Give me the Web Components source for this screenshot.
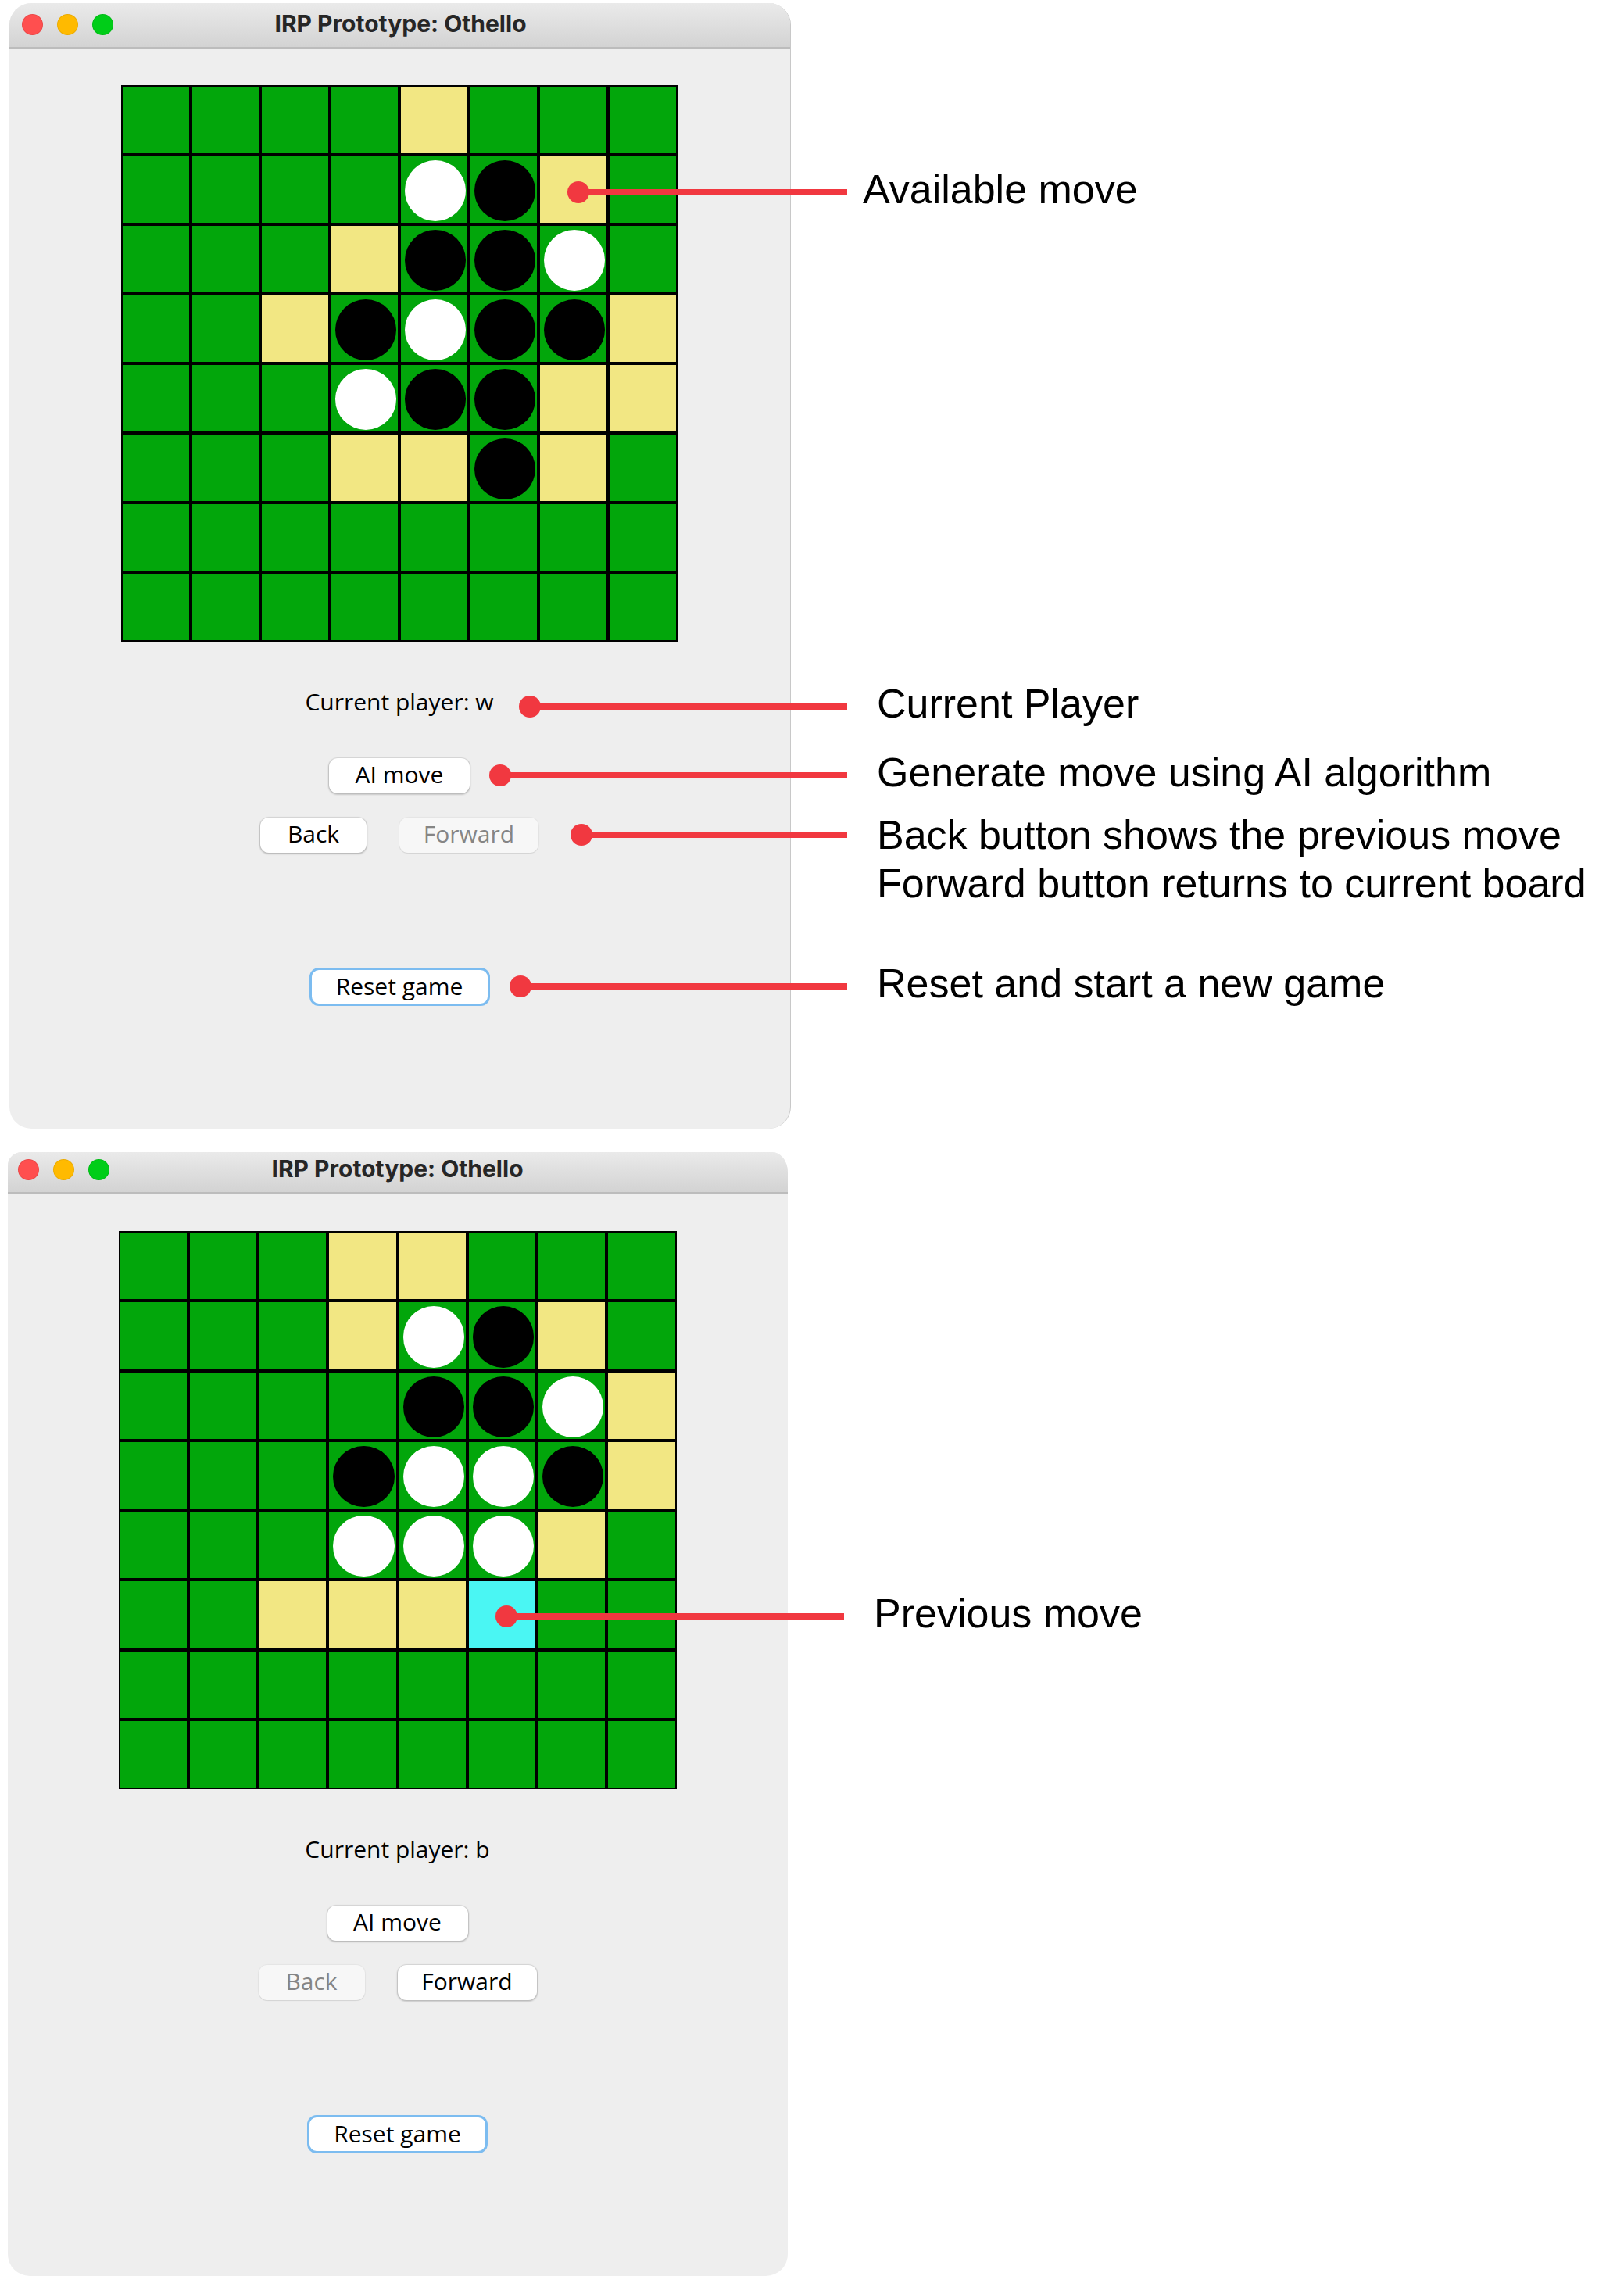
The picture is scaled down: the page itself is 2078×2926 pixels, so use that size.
<!DOCTYPE html>
<html lang="en">
<head>
<meta charset="utf-8">
<title>IRP Prototype: Othello</title>
<style>
  body { margin: 0; background: #fff; color: #000; font-family: "Liberation Sans", Arial, sans-serif; }
</style>
</head>
<body>
<othello-guide></othello-guide>

<script>
class OthelloBoard extends HTMLElement {
  connectedCallback() {
    const kinds = { m: "available move", p: "previous move", w: "white piece", b: "black piece", ".": "empty" };
    const rows = this.getAttribute("rows").trim().split(/\s+/);
    const cells = rows.map((row, r) => [...row].map((c, i) =>
      `<div class="cell ${c === "." ? "" : c}" role="img" aria-label="${"abcdefgh"[i]}${r + 1} ${kinds[c]}"></div>`).join("")).join("");
    this.attachShadow({ mode: "open" }).innerHTML = `
      <style>
        :host { display: grid; grid-template-columns: repeat(8, 1fr); gap: 4px; padding: 2px;
                box-sizing: border-box; background: #000; width: 100%; max-width: var(--board, 712px); aspect-ratio: 1; }
        .cell { background: #02a60b; box-sizing: border-box; padding: 5px 2px 2px 5px; display: grid; }
        .m { background: #f2e783; }
        .p { background: #4af6f3; }
        .w::before, .b::before { content: ""; border-radius: 50%; background: #fff; }
        .b::before { background: #000; }
      </style>${cells}`;
  }
}
customElements.define("othello-board", OthelloBoard);

class MacButton extends HTMLElement {
  connectedCallback() {
    const off = this.hasAttribute("disabled") ? "disabled" : "";
    this.attachShadow({ mode: "open" }).innerHTML = `
      <style>
        :host { display: block; }
        button { display: block; box-sizing: border-box; height: 45px; min-width: var(--w, 180px); padding: 0 0 3px;
                 border: 0; border-radius: 11px; background: #fff; color: #000;
                 font: inherit; line-height: 42px;
                 box-shadow: 0 0 1px 1px rgba(0,0,0,.07), 0 1px 2px 1px rgba(0,0,0,.16); }
        button:disabled { background: #f7f7f7; color: #858585; box-shadow: 0 0 1px 1px rgba(0,0,0,.04), 0 1px 1px rgba(0,0,0,.08); }
        :host([focused]) button { height: 49px; border: 3px solid #7cbcf0; box-shadow: none; border-radius: 12px; }
      </style>
      <button type="button" ${off}><slot></slot></button>`;
  }
}
customElements.define("mac-button", MacButton);

class MacWindow extends HTMLElement {
  connectedCallback() {
    this.attachShadow({ mode: "open" }).innerHTML = `
      <style>
        :host { display: block; box-sizing: border-box; background: #eee; overflow: hidden;
                border-radius: var(--corners, 28px); border-right: var(--edge, 1px solid #c8c8c8); }
        header { display: grid; grid-template-columns: 1fr auto 1fr; align-items: start; box-sizing: border-box;
                 padding: var(--bar-top, 14px) 14px 0 var(--bar-left, 16px); height: var(--bar, 59px);
                 background: linear-gradient(#eaeaea, #d3d3d3); border-bottom: 3px solid #bcbcbc; }
        .lights { display: flex; gap: 18px; }
        .lights i { width: 27px; height: 27px; border-radius: 50%; background: #ff4f4f; box-shadow: inset 0 0 0 1px rgba(0,0,0,.08); }
        .lights i:nth-child(2) { background: #ffba00; }
        .lights i:nth-child(3) { background: #00cd18; }
        h1 { margin: 0; font: 700 30px/25px Inter, "Liberation Sans", sans-serif; color: #262626; }
        main { display: flex; flex-direction: column; align-items: center; padding: var(--main-top, 46px) 1px 157px 0; }
      </style>
      <header><div class="lights"><i></i><i></i><i></i></div><h1>${this.getAttribute("heading")}</h1></header>
      <main><slot></slot></main>`;
  }
}
customElements.define("mac-window", MacWindow);

class OthelloGame extends HTMLElement {
  connectedCallback() {
    const at = n => this.getAttribute(n);
    this.attachShadow({ mode: "open" }).innerHTML = `
      <style>
        :host { display: block; min-width: 0; }
        .panel { display: flex; flex-direction: column; align-items: center; width: 100%;
                 font: 500 30px/40px "Open Sans", "Noto Sans", sans-serif; }
        p { margin: 57px 0 52px; }
        .row { display: flex; gap: 42px; margin: 31px 0 147px; }
      </style>
      <mac-window heading="IRP Prototype: Othello">
        <div class="panel">
          <othello-board rows="${at("rows")}"></othello-board>
          <p>Current player: ${at("player")}</p>
          <mac-button>AI move</mac-button>
          <div class="row">
            <mac-button style="--w:136px" ${at("player") === "b" ? "disabled" : ""}>Back</mac-button>
            <mac-button style="--w:178px" ${at("player") === "w" ? "disabled" : ""}>Forward</mac-button>
          </div>
          <mac-button style="--w:231px" focused>Reset game</mac-button>
        </div>
      </mac-window>`;
  }
}
customElements.define("othello-game", OthelloGame);

class CallOut extends HTMLElement {
  connectedCallback() {
    this.attachShadow({ mode: "open" }).innerHTML = `
      <style>
        :host { display: flex; align-items: flex-start; gap: 38px; font-size: 52px; line-height: 62px; white-space: nowrap; }
        .lead { flex: none; display: flex; align-items: center; width: var(--len); height: 28px; margin-top: 21px; }
        :host([two-line]) .lead { margin-top: 17px; }
        .dot { flex: none; width: 28px; height: 28px; border-radius: 50%; background: #f13840; }
        .line { flex: 1; height: 8px; margin-left: -2px; background: #f13840; }
      </style>
      <div class="lead"><span class="dot"></span><span class="line"></span></div>
      <div><slot></slot></div>`;
  }
}
customElements.define("call-out", CallOut);

class OthelloGuide extends HTMLElement {
  connectedCallback() {
    this.attachShadow({ mode: "open" }).innerHTML = `
      <style>
        :host { display: flex; flex-direction: column; gap: 30px; padding: 4px 0 14px; }
        section { display: grid; grid-template-columns: minmax(0, 1012px) 1fr; }
        othello-game { grid-area: 1 / 1; margin-left: 12px; }
        .second { grid-template-columns: minmax(0, 1008px) 1fr; }
        .second othello-game { margin-left: 10px; --board: 714px; --bar: 54px; --bar-top: 9px; --bar-left: 13px;
                               --main-top: 47px; --edge: 0; --corners: 18px 20px 28px 28px / 17px 26px 28px 28px; }
        .notes { grid-area: 1 / 1 / 2 / 3; display: flex; flex-direction: column; pointer-events: none; }
      </style>
      <section>
        <othello-game player="w" rows="....m... ....wbm. ...mbbw. ..mbwbbm ...wbbmm ...mmbm. ........ ........"></othello-game>
        <div class="notes">
          <call-out style="margin:207px 0 596px 726px; --len:358px; gap:20px">Available move</call-out>
          <call-out style="margin:0 0 26px 664px; --len:420px">Current Player</call-out>
          <call-out style="margin:0 0 18px 626px; --len:458px">Generate move using AI algorithm</call-out>
          <call-out two-line style="margin:0 0 66px 730px; --len:354px">Back button shows the previous move<br>Forward button returns to current board</call-out>
          <call-out style="margin:0 0 0 652px; --len:432px">Reset and start a new game</call-out>
        </div>
      </section>
      <section class="second">
        <othello-game player="b" rows="...mm... ...mwbm. ....bbwm ...bwwbm ...wwwm. ..mmmp.. ........ ........"></othello-game>
        <div class="notes">
          <call-out style="margin:559px 0 0 634px; --len:446px">Previous move</call-out>
        </div>
      </section>`;
  }
}
customElements.define("othello-guide", OthelloGuide);
</script>
</body>
</html>
